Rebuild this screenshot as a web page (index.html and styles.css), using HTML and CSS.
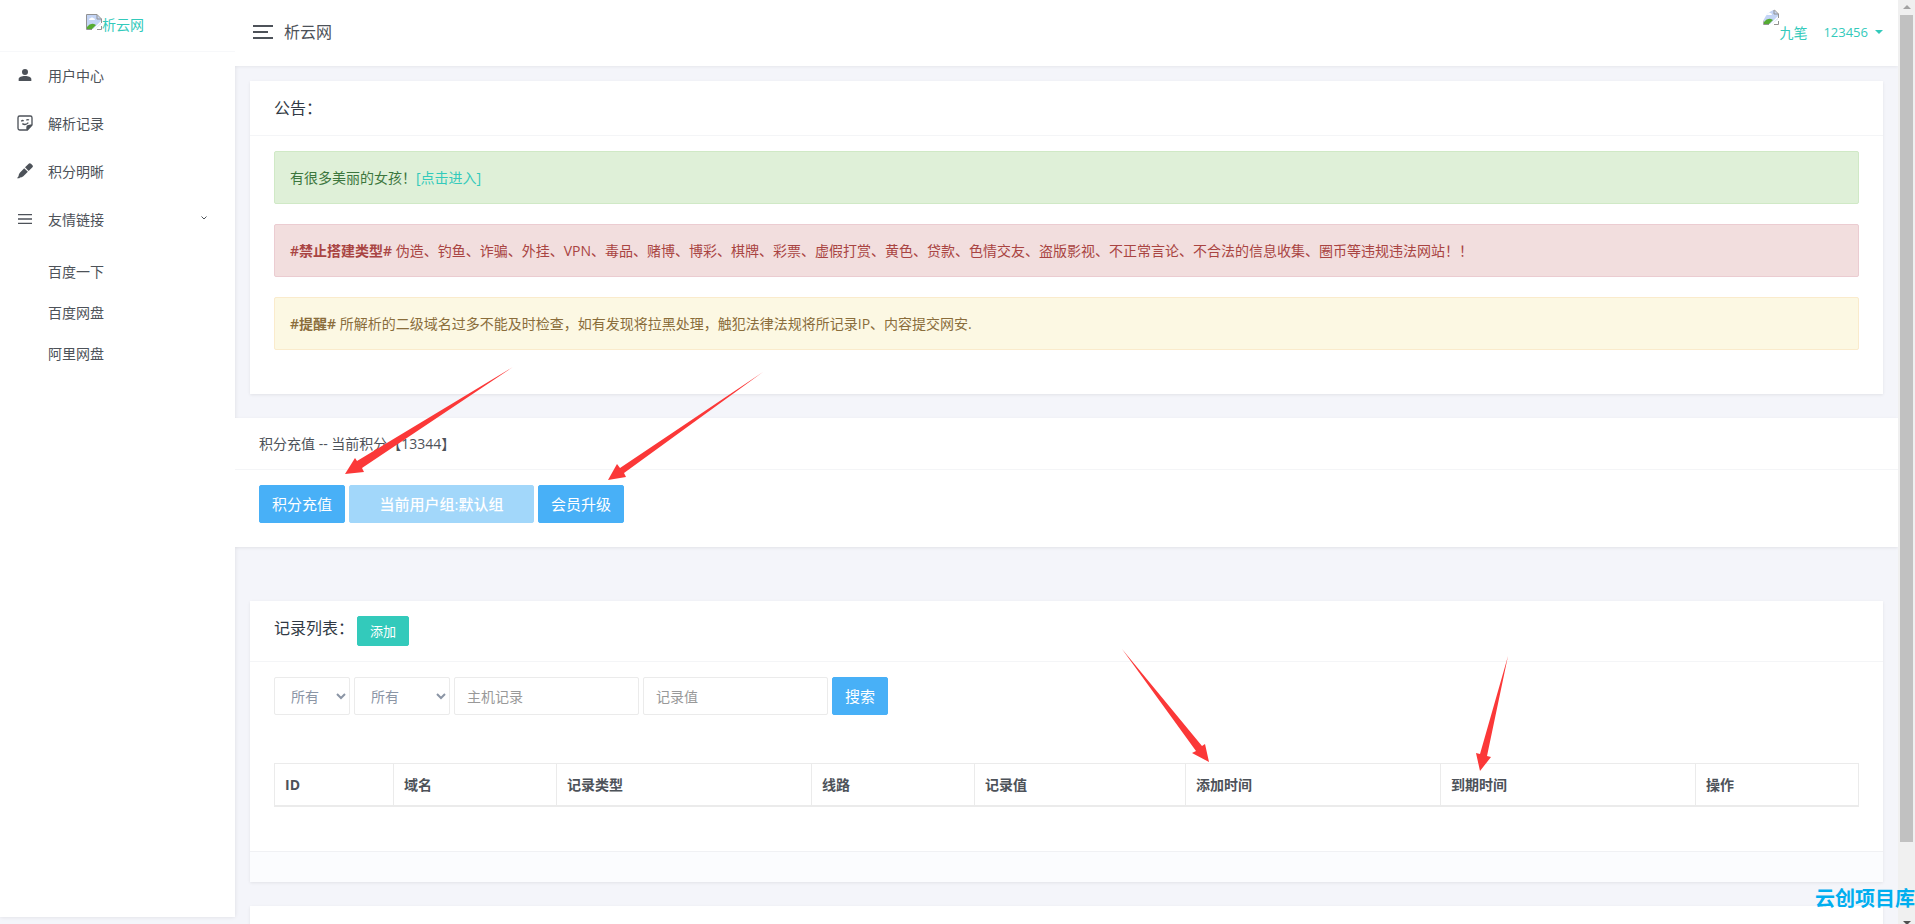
FILE: index.html
```html
<!DOCTYPE html>
<html lang="zh-CN">
<head>
<meta charset="utf-8">
<meta name="viewport" content="width=device-width, initial-scale=1">
<title>析云网</title>
<link rel="stylesheet" href="styles.css">
</head>
<body>
<svg class="defs" aria-hidden="true">
  <symbol id="broken-image" viewBox="0 0 16 16">
    <path d="M1 1h10l4 4v5l-6 5H1z" fill="#c3d4f5"/>
    <path d="M3 6q0-2 2-2 1-1.500 2 0 2 0 2 2z" fill="#fff"/>
    <path d="M1 15v-2q3-4 7-3l2 1-4 4z" fill="#56ab32"/>
    <path d="M7 15l8-8v2l-6 6z" fill="#fff"/>
    <path d="M.500 15.500V.500h10.500l4.500 4.500v4M11 .500V5h4.500M.500 15.500H6M11 15.500h4.500V12" fill="none" stroke="#929292"/>
  </symbol>
</svg>
<div class="app">
  <aside class="sidebar">
    <a class="brand" href="#"><svg class="broken"><use href="#broken-image"/></svg><span>析云网</span></a>
    <nav class="menu">
      <a class="menu-item" href="#">
        <svg class="menu-icon" viewBox="0 0 24 24"><path fill="currentColor" d="M12 3a4.500 4.500 0 1 1 0 9 4.500 4.500 0 0 1 0-9zm0 10.500c5 0 9.500 1.800 9.500 4.500v3h-19v-3c0-2.700 4.500-4.500 9.500-4.500z"/></svg>
        <span>用户中心</span>
      </a>
      <a class="menu-item" href="#">
        <svg class="menu-icon" viewBox="0 0 24 24"><path fill="none" stroke="currentColor" stroke-width="2" d="M4 1.500h16q2.500 0 2.500 2.500v11l-7 7.500H4q-2.500 0-2.500-2.500V4Q1.500 1.500 4 1.500z"/><path fill="currentColor" d="M22 14v2l-6 6h-2v-4q0-3 3-3z"/><path fill="none" stroke="currentColor" stroke-width="2" d="M6.500 9.500q1.500-2 3.500-.5M14 8q2-2 4-.5M8 13q5 3 9-1.500"/></svg>
        <span>解析记录</span>
      </a>
      <a class="menu-item" href="#">
        <svg class="menu-icon" viewBox="0 0 24 24"><path fill="currentColor" d="M18 .800q1.500-1 3 .5l2.200 2.200q1.300 1.500 0 3L17.500 12 12 6.500zM10.800 7.700l5.500 5.500-6.800 6.600q-2.500 2-5 2L3.500 23H0l2.300-3q.2-3.500 2-5.500z"/></svg>
        <span>积分明晰</span>
      </a>
      <a class="menu-item" href="#">
        <svg class="menu-icon" viewBox="0 0 24 24"><path fill="none" stroke="currentColor" stroke-width="2" d="M1.500 5.500h21M1.500 12h21M1.500 18.500h21"/></svg>
        <span>友情链接</span>
        <svg class="menu-arrow" viewBox="0 0 6 4"><path fill="none" stroke="currentColor" d="M.500.500 3 3 5.500.500"/></svg>
      </a>
      <div class="submenu">
        <a href="#">百度一下</a>
        <a href="#">百度网盘</a>
        <a href="#">阿里网盘</a>
      </div>
    </nav>
  </aside>
  <div class="page">
    <header class="topbar">
      <button class="toggle" type="button" aria-label="菜单"><i></i><i></i><i></i></button>
      <span class="topbar-title">析云网</span>
      <a class="user" href="#">
        <svg class="avatar"><use href="#broken-image"/></svg>
        <span class="nick">九笔</span>
        <span class="uid">123456</span>
        <i class="caret"></i>
      </a>
    </header>
    <main class="content">
      <section class="card">
        <div class="card-header"><h4>公告：</h4></div>
        <div class="card-body notices">
          <div class="alert success">有很多美丽的女孩！<a href="#">[点击进入]</a></div>
          <div class="alert danger"><strong>#禁止搭建类型#</strong> 伪造、钓鱼、诈骗、外挂、VPN、毒品、赌博、博彩、棋牌、彩票、虚假打赏、黄色、贷款、色情交友、盗版影视、不正常言论、不合法的信息收集、圈币等违规违法网站！！</div>
          <div class="alert warning"><strong>#提醒#</strong> 所解析的二级域名过多不能及时检查，如有发现将拉黑处理，触犯法律法规将所记录IP、内容提交网安.</div>
        </div>
      </section>
      <section class="points">
        <div class="points-header">积分充值 -- 当前积分【13344】</div>
        <div class="points-body">
          <button class="btn info" type="button">积分充值</button>
          <button class="btn info group" type="button" disabled>当前用户组:默认组</button>
          <button class="btn info" type="button">会员升级</button>
        </div>
      </section>
      <section class="card">
        <div class="card-header"><h4>记录列表：</h4><button class="btn primary" type="button">添加</button></div>
        <div class="card-body">
          <form class="filters">
            <select class="field short" aria-label="域名"><option>所有</option></select>
            <select class="field medium" aria-label="记录类型"><option>所有</option></select>
            <input class="field" type="text" placeholder="主机记录" aria-label="主机记录">
            <input class="field" type="text" placeholder="记录值" aria-label="记录值">
            <button class="btn info" type="button">搜索</button>
          </form>
          <table class="records">
            <colgroup><col class="c-id"><col class="c-m"><col class="c-l"><col class="c-m"><col class="c-v"><col class="c-l"><col class="c-l"><col class="c-m"></colgroup>
            <thead><tr><th>ID</th><th>域名</th><th>记录类型</th><th>线路</th><th>记录值</th><th>添加时间</th><th>到期时间</th><th>操作</th></tr></thead>
          </table>
        </div>
        <div class="card-footer"></div>
      </section>
      <section class="card next"></section>
    </main>
  </div>
  <div class="scrollbar" aria-hidden="true"><i class="up"></i><i class="thumb"></i><i class="down"></i></div>
</div>
<svg class="arrows" viewBox="0 0 1915 924" aria-hidden="true">
  <path d="M513 367 362 468 364 472 345 474 355 458 357 461z"/>
  <path d="M763 372 624 473 626 477 608 480 617 464 620 468z"/>
  <path d="M1122 649 1202 746 1205 744 1209 762 1192 753 1196 751z"/>
  <path d="M1508 656 1487 756 1491 757 1480 771 1476 753 1480 754z"/>
</svg>
<div class="watermark">云创项目库</div>
</body>
</html>
```

FILE: styles.css
```css
* { box-sizing: border-box; }

body {
  margin: 0;
  overflow: hidden;
  background: #f4f5fa;
  color: #4d5259;
  font: 14px/21px "Open Sans", "Noto Sans CJK SC", sans-serif;
}

a { color: #33cabb; text-decoration: none; }
button, input, select { font: inherit; }

.defs { position: absolute; width: 0; height: 0; }

.app {
  display: grid;
  grid-template-columns: 235px 1fr 17px;
  height: 100vh;
}

/* Sidebar */
.sidebar {
  margin-bottom: 7px;
  background: #fff;
  box-shadow: 0 0 4px rgba(0, 0, 0, .1);
}

.brand {
  display: flex;
  justify-content: center;
  height: 52px;
  margin-bottom: -1px;
  padding: 14px 5px 0 0;
  border-bottom: 1px solid #f7f8fa;
}

.broken { width: 16px; height: 16px; }

.menu-item {
  display: flex;
  align-items: center;
  height: 48px;
  padding: 0 28px 0 17px;
  color: #4d5259;
}

.menu-icon { width: 16px; height: 16px; margin-right: 15px; }
.menu-arrow { width: 6px; height: 4px; margin: 0 0 2px auto; }

.submenu { padding-top: 8px; }

.submenu a {
  display: block;
  padding: 10px 0 10px 48px;
  color: #4d5259;
}

/* Header */
.page { min-width: 0; overflow: hidden; }

.topbar {
  display: flex;
  align-items: center;
  height: 66px;
  padding: 0 15px 2px 18px;
  background: #fff;
  box-shadow: 0 1px 3px rgba(0, 0, 0, .06);
}

.toggle {
  display: grid;
  gap: 4px;
  width: 20px;
  margin-right: 11px;
  padding: 0;
  border: 0;
  background: none;
}

.toggle i { height: 2px; background: #4d5259; }
.toggle i:nth-child(2) { width: 15px; }
.topbar-title { font-size: 16px; }

.user { display: flex; align-items: center; margin-left: auto; }

.avatar {
  width: 16px;
  height: 16px;
  margin-bottom: 30px;
  border-radius: 16px 0 0 0;
}

.uid { margin-left: 16px; font-size: 13px; }

.caret {
  margin-left: 7px;
  border: 4px solid transparent;
  border-top-color: currentColor;
  border-bottom: 0;
}

/* Cards */
.content { padding-top: 15px; }

.card {
  margin: 0 15px 24px;
  background: #fff;
  box-shadow: 0 1px 3px rgba(0, 0, 0, .08);
}

.card-header {
  display: flex;
  gap: 3px;
  padding: 15px 24px;
  border-bottom: 1px solid #f4f5f7;
}

.card-header h4 {
  margin: 0;
  color: #313944;
  font-size: 16px;
  font-weight: 400;
  line-height: 24px;
}

.card-body { padding: 15px 24px 44px; }

.alert {
  margin-bottom: 20px;
  padding: 15px;
  border: 1px solid;
  border-radius: 2px;
}

.alert:last-child { margin-bottom: 0; }
.alert strong { font-weight: 600; }
.success { background: #dff0d8; border-color: #d0e9c6; color: #3c763d; }
.danger { background: #f2dede; border-color: #ebccd1; color: #a94442; }
.warning { background: #fcf8e3; border-color: #faebcc; color: #8a6d3b; }

.points {
  margin-bottom: 54px;
  background: #fff;
  box-shadow: 0 1px 3px rgba(0, 0, 0, .08);
}

.points-header { padding: 15px 24px; border-bottom: 1px solid #f4f5f7; }
.points-body { display: flex; gap: 4px; padding: 15px 24px 24px; }

.btn {
  height: 38px;
  padding: 0 12px;
  border: 1px solid;
  border-radius: 2px;
  color: #fff;
  font-size: 15px;
}

.info { background: #48b0f7; border-color: #48b0f7; }
.primary { height: 30px; background: #33cabb; border-color: #33cabb; font-size: 13px; }
.group { width: 185px; opacity: .5; font-weight: 500; }

/* Record list */
.filters { display: flex; gap: 4px; margin-bottom: 48px; }

.field {
  width: 185px;
  height: 38px;
  padding: 5px 12px;
  border: 1px solid #ebebeb;
  border-radius: 2px;
  background: #fff;
  color: #8b95a5;
}

.field::placeholder { color: #999; }
.short { width: 76px; }
.medium { width: 96px; }

.records {
  width: 100%;
  border-collapse: collapse;
  table-layout: fixed;
}

.records th {
  height: 42px;
  padding: 0 10px;
  border: 1px solid #ebebeb;
  border-bottom-width: 2px;
  font-weight: 700;
  text-align: left;
}

.c-id { width: 119px; }
.c-m { width: 163px; }
.c-l { width: 255px; }

.card-footer {
  height: 31px;
  border-top: 1px solid #f0f1f4;
  background: #fbfcfe;
}

.next { height: 60px; }

/* Window scrollbar */
.scrollbar {
  display: flex;
  flex-direction: column;
  align-items: center;
  padding-top: 5px;
  background: #f0f0f0;
}

.up { border: 4px solid transparent; border-top: 0; border-bottom-color: #a3a3a3; }
.thumb { flex: 1; width: 13px; margin: 6px 0 79px; background: #c1c1c1; }
.down { border: 4px solid transparent; border-top-color: #505050; border-bottom: 0; margin-bottom: -1px; }

/* Annotations over the page */
.arrows {
  position: absolute;
  top: 0;
  left: 0;
  width: 100%;
  fill: #fb3838;
  pointer-events: none;
}

.watermark {
  position: absolute;
  right: 0;
  bottom: 15px;
  color: #00aeef;
  font-size: 20px;
  font-weight: 600;
  white-space: nowrap;
}
```
